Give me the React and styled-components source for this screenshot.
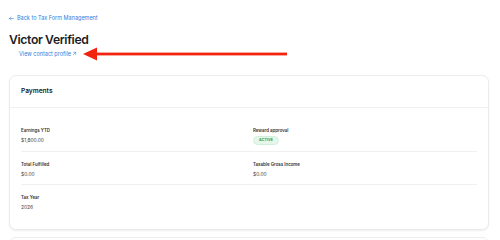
import React from "react";
import styled, { createGlobalStyle } from "styled-components";

const GlobalStyle = createGlobalStyle`
  html, body { margin: 0; padding: 0; background: #ffffff; }
  body {
    font-family: Inter, "Noto Sans", "Liberation Sans", sans-serif;
    color: #1d1d1f;
    line-height: 1.2;
  }
`;

const Page = styled.div`
  position: relative;
  width: 500px;
  height: 240px;
  box-sizing: border-box;
  padding: 13px 11px 0 9px;
  overflow: hidden;
`;

const BackLink = styled.a`
  display: flex;
  width: fit-content;
  align-items: center;
  gap: 3px;
  height: 10px;
  font-size: 5.5px;
  line-height: 10px;
  color: #2f7de1;
  text-decoration: none;
`;

const Title = styled.h1`
  margin: 8.6px 0 0;
  font-size: 12.2px;
  line-height: 16px;
  font-weight: 600;
  letter-spacing: -0.03em;
  color: #1d1d1f;
`;

const ProfileLink = styled.a`
  display: flex;
  width: fit-content;
  align-items: center;
  gap: 1.5px;
  margin: 1px 0 0 10px;
  height: 10px;
  font-size: 5.5px;
  line-height: 10px;
  color: #2f7de1;
  text-decoration: none;
`;

const Card = styled.section`
  margin-top: ${(p) => p.$gap || 0}px;
  width: 480px;
  box-sizing: border-box;
  border: 1px solid #ececec;
  border-radius: 7px;
  background: #fff;
  box-shadow: 0 1px 2px rgba(0, 0, 0, 0.07);
  ${(p) => (p.$height ? `height: ${p.$height}px;` : "")}
`;

const CardHeader = styled.header`
  height: 31px;
  display: flex;
  align-items: center;
  padding: 0 11px;
  border-bottom: 1px solid #f0f0f0;
  font-size: 6.6px;
  font-weight: 600;
  color: #222;
`;

const CardBody = styled.div`
  padding: 11px 11px 12px 11px;
`;

const Row = styled.div`
  display: grid;
  grid-template-columns: 1fr 1fr;
  column-gap: 8px;
  padding: ${(p) => (p.$first ? "8px 0 6px" : "9px 0 5px")};
  border-bottom: ${(p) => (p.$last ? "none" : "1px solid #f0f0f0")};
`;

const Field = styled.div`
  display: flex;
  flex-direction: column;
  align-items: flex-start;
`;

const Label = styled.div`
  font-size: 4.4px;
  line-height: 8px;
  font-weight: 600;
  color: #333;
`;

const Value = styled.div`
  display: flex;
  align-items: center;
  height: 10px;
  font-size: 4.9px;
  line-height: 10px;
  color: #444;
`;

const Badge = styled.span`
  display: inline-flex;
  align-items: center;
  justify-content: center;
  height: 9.5px;
  padding: 0 5px;
  border-radius: 999px;
  background: #e7f6ea;
  border: 0.5px solid #d3efd9;
  color: #2f9a4a;
  font-size: 3.6px;
  font-weight: 700;
  letter-spacing: 0.03em;
  box-sizing: border-box;
`;

const ArrowOverlay = styled.svg`
  position: absolute;
  left: 80px;
  top: 45px;
  width: 212px;
  height: 20px;
  pointer-events: none;
`;

const Small = styled.svg`
  flex: none;
`;

const rows = [
  [
    { label: "Earnings YTD", value: "$1,800.00" },
    { label: "Reward approval", badge: "ACTIVE" },
  ],
  [
    { label: "Total Fulfilled", value: "$0.00" },
    { label: "Taxable Gross Income", value: "$0.00" },
  ],
  [{ label: "Tax Year", value: "2026" }],
];

export default function App() {
  return (
    <>
      <GlobalStyle />
      <Page>
        <BackLink href="#">
          <Small width="5" height="5" viewBox="0 0 12 12" fill="none" stroke="currentColor" strokeWidth="1.3" strokeLinecap="round" strokeLinejoin="round">
            <path d="M10.5 6H1.5M5 2.5L1.5 6L5 9.5" />
          </Small>
          <span>Back to Tax Form Management</span>
        </BackLink>
        <Title>Victor Verified</Title>
        <ProfileLink href="#">
          View contact profile
          <Small width="5" height="5" viewBox="0 0 10 10" fill="none" stroke="currentColor" strokeWidth="1.1" strokeLinecap="round" strokeLinejoin="round">
            <path d="M2.5 7.5L7.5 2.5M3.5 2.5H7.5V6.5" />
          </Small>
        </ProfileLink>
        <Card $gap={16.7}>
          <CardHeader>Payments</CardHeader>
          <CardBody>
            {rows.map((r, i) => (
              <Row key={i} $first={i === 0} $last={i === rows.length - 1}>
                {r.map((f) => (
                  <Field key={f.label}>
                    <Label>{f.label}</Label>
                    {f.badge ? (
                      <Value><Badge>{f.badge}</Badge></Value>
                    ) : (
                      <Value>{f.value}</Value>
                    )}
                  </Field>
                ))}
              </Row>
            ))}
          </CardBody>
        </Card>
        <Card $gap={7} $height={40} />
        <ArrowOverlay viewBox="0 0 212 20">
          <rect x="14" y="7.6" width="193" height="2.8" fill="#f2230f" />
          <polygon points="3,9 17,2.6 17,15.6" fill="#f2230f" />
        </ArrowOverlay>
      </Page>
    </>
  );
}
